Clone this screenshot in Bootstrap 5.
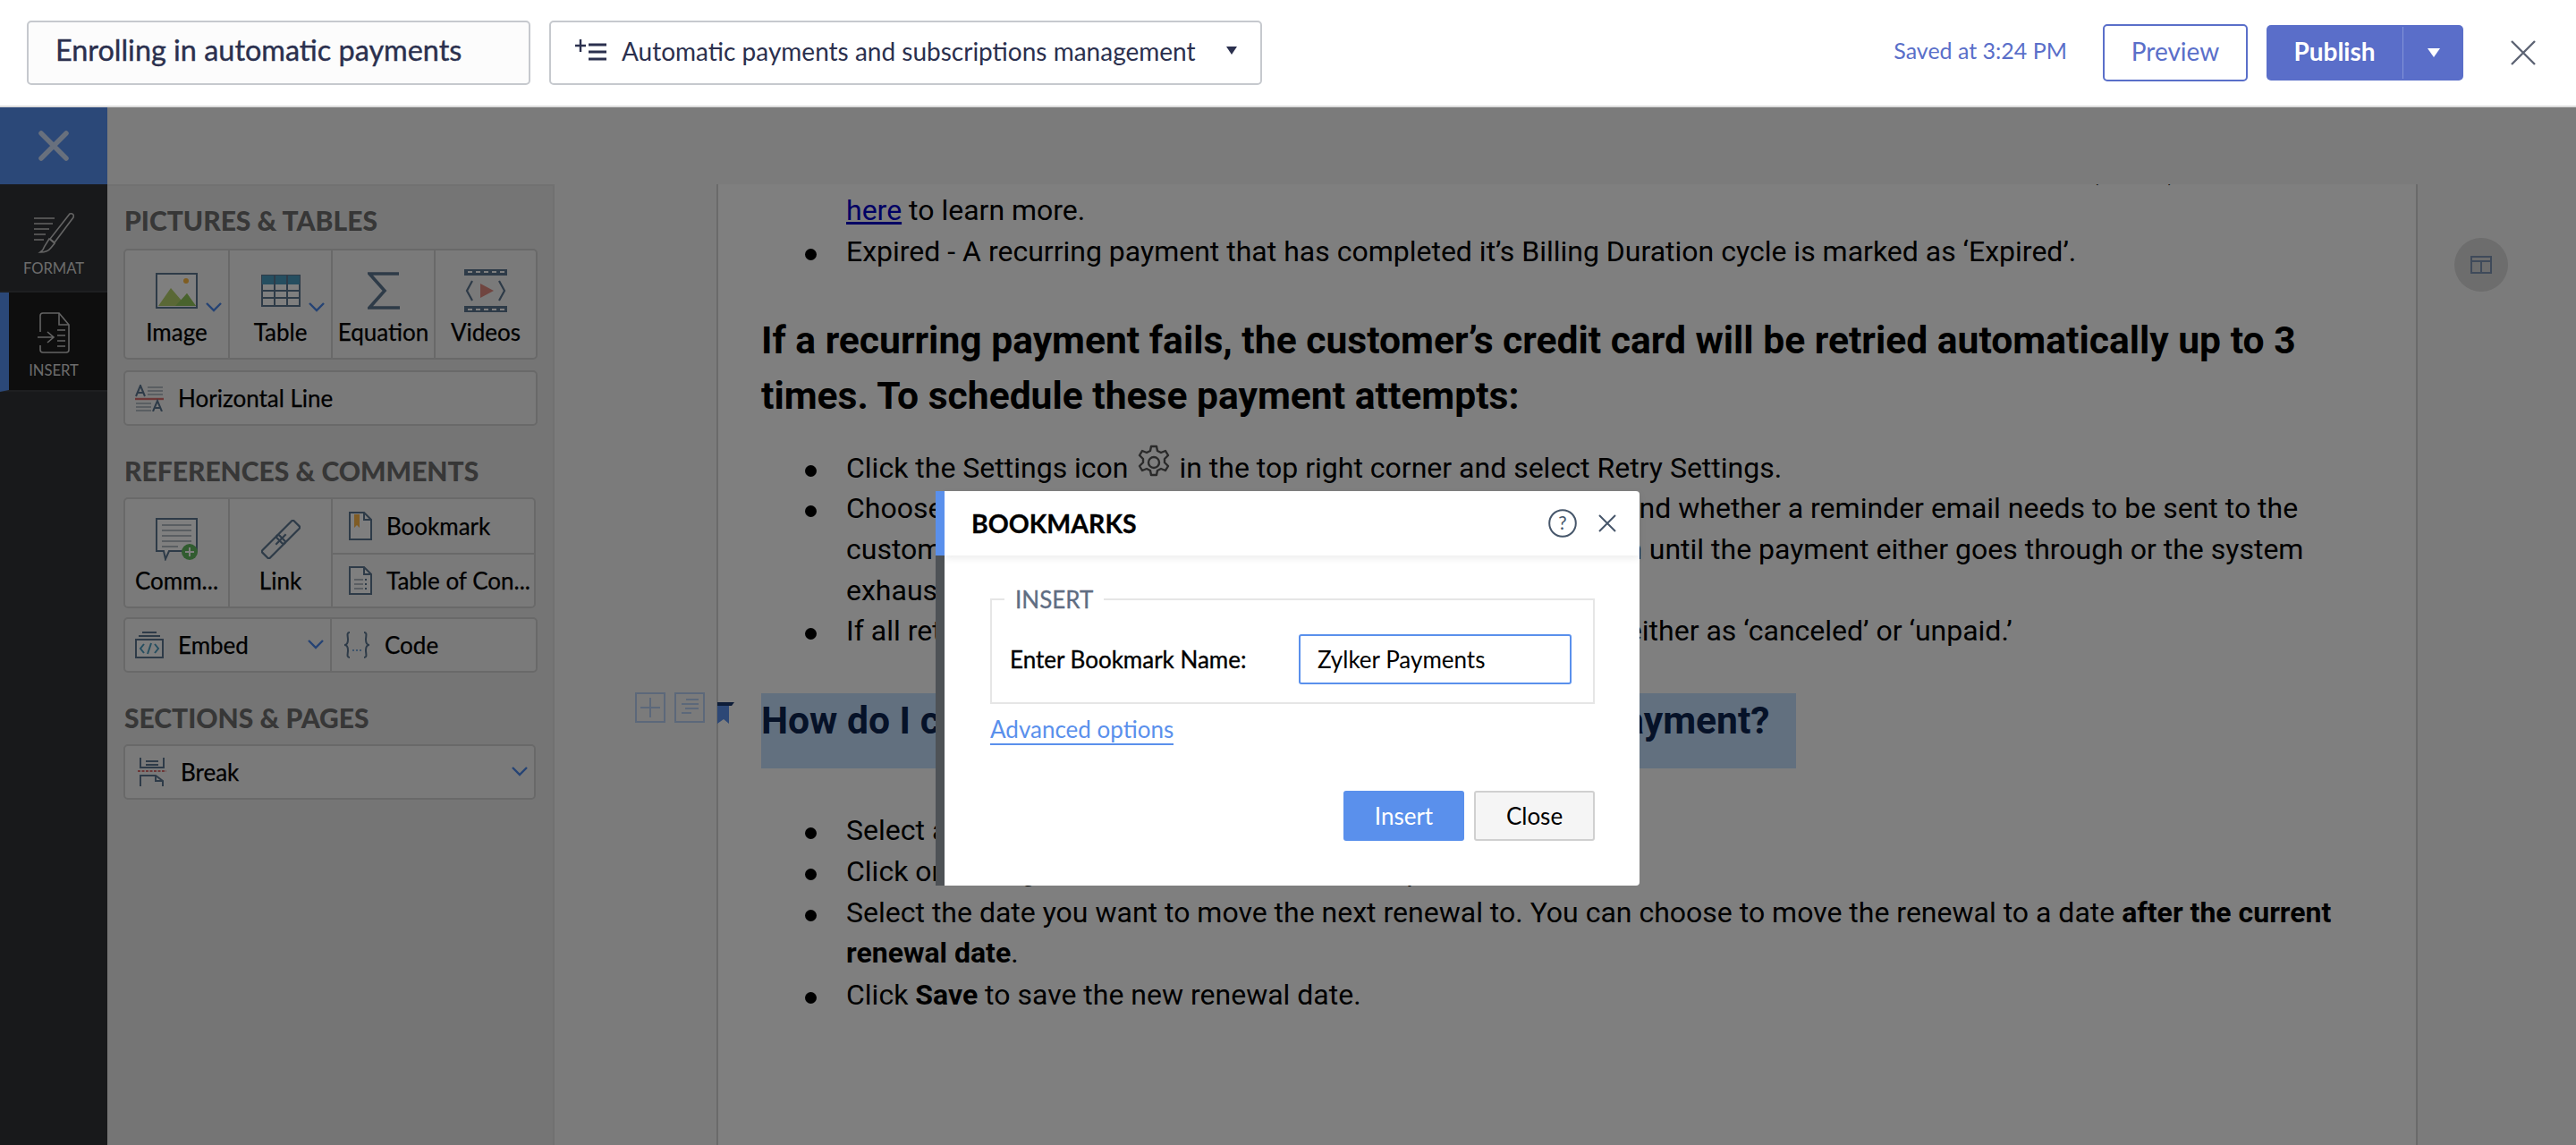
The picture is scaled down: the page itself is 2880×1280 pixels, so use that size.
<!DOCTYPE html>
<html lang="en">
<head>
<meta charset="utf-8">
<title>Enrolling in automatic payments</title>
<link rel="stylesheet" href="https://cdn.jsdelivr.net/npm/bootstrap@5.3.0/dist/css/bootstrap.min.css">
<style>
html,body{height:100%;margin:0;overflow:hidden;background:#fff}
body{font-family:"Lato","Liberation Sans",sans-serif;color:#000}
.top-bar{height:120px;border-bottom:2px solid #dcdcdc;padding:0 30px;background:#fff}
.title-box{width:563px;height:72px;border:2px solid #c6c9ce;border-radius:5px;background:#fcfcfc;padding:0 0 5px 30px;font-size:32.4px;color:#2b304e;-webkit-text-stroke:.4px #2b304e}
.cat-box{width:797px;height:72px;border:2px solid #c6c9ce;border-radius:5px;margin-left:21px;padding:0 26px 5px 27px;font-size:28px;color:#2b304e}
.caret-down{width:0;height:0;border-left:6px solid transparent;border-right:6px solid transparent;border-top:9px solid currentColor}
.saved-note{font-size:25px;color:#5a6fc9;margin-right:40px;padding-bottom:4px}
.btn-preview{width:162px;height:64px;border:2px solid #5a6fc9;border-radius:5px;color:#5a6fc9;font-size:28px;background:#fff;padding:0 0 5px}
.btn-preview:hover{color:#5a6fc9}
.publish-wrap{width:220px;height:62px;margin-left:21px;background:#5a6ec9;border-radius:5px;color:#fff}
.publish-main{width:153px;font-size:28px;font-weight:700;text-align:center;border-right:1px solid #8494d8;height:58px;line-height:54px}
.publish-arrow{flex:1;display:flex;justify-content:center}
.publish-arrow .caret-down{border-left-width:7px;border-right-width:7px;border-top-width:10px}
.shut-x{margin-left:53px;margin-right:15px}
.work-area{height:1160px;position:relative}
.scrim{position:absolute;inset:0;background:rgba(0,0,0,.5);z-index:5}
.side-rail{width:120px;background:#303236;color:#fff}
.rail-close{height:86px;background:#5690f0}
.rail-tab{height:121px;text-align:center;font-size:16.6px;line-height:22px;border-bottom:2px solid #3c3e42;padding-top:31px;color:#d8d8d8}
.rail-tab.is-on{height:111px;background:#1c1c1c;border-left:10px solid #5690f0;padding:22px 10px 0 0}
.rail-tab svg{display:block;margin:0 auto 6px}
.rail-tab.is-on svg{margin-bottom:8px}
.work-main{flex:1;min-width:0;background:#f6f6f6}
.strip-top{height:86px}
.work-row{height:1074px}
.tool-panel{width:500px;background:#ebebeb;border-top:2px solid #e2e2e2;border-right:2px solid #e2e2e2;padding:0 17px 0 19px}
.sec-title{font-size:30px;font-weight:900;color:#6e6e6e;line-height:36px;margin:0;text-transform:uppercase}
.tool-group{border:2px solid #d2d2d2;border-radius:5px;background:#f5f5f5;width:463px;margin-left:-1px;font-size:26px;-webkit-text-stroke:.25px #000}
.tool-group>*+*{border-left:2px solid #d2d2d2}
.big-cell{position:relative;width:115px;height:120px;padding-top:12px;display:flex;flex-direction:column;align-items:center;flex:none}
.big-cell .ic-box{height:66px;display:flex;align-items:center;justify-content:center}
.big-cell .lab{line-height:30px;white-space:nowrap;margin-top:-2px}
.down-mark{position:absolute;right:7px;top:58px}
.row-cell{height:58px;display:flex;align-items:center;position:relative;white-space:nowrap}
.side-slots{flex:1;display:flex;flex-direction:column;min-width:0}
.side-slots .row-cell{height:60px;padding-left:18px}
.side-slots .row-cell+.row-cell{border-top:2px solid #d2d2d2}
.slot-ic{margin-right:16px;flex:none}
.doc-zone{flex:1;position:relative;min-width:0}
.doc-page{position:absolute;left:181px;top:0;width:1902px;height:1074px;background:#fff;border-left:2px solid #d4d4d4;border-right:2px solid #d4d4d4;overflow:hidden;padding-left:48px;font-family:"Roboto","Liberation Sans",sans-serif;font-size:32px;line-height:45.75px;color:#000}
.doc-page ul{padding-left:95px;margin:0;white-space:nowrap;list-style:none}
.doc-page li{position:relative}
.doc-page li::before{content:"";position:absolute;left:-46px;top:19px;width:13px;height:13px;border-radius:50%;background:#000}
.doc-page h2{font-family:"Roboto","Liberation Sans",sans-serif;font-weight:700;font-size:42.6px;line-height:62px;margin:0;white-space:nowrap}
.doc-page a{color:#0000c8}
.doc-page h2.picked-head{background:#c4e0ff;width:1157px;height:84px;color:#0c2450;line-height:60px}
.gear-inline{vertical-align:top;margin:-4px 8px 0 1px}
.gut-box{position:absolute;top:568px;width:34px;height:34px;border:2px solid #b8d0f4}
.gut-flag{position:absolute;left:182px;top:579px}
.side-dot{position:absolute;left:2124px;top:60px;width:60px;height:60px;border-radius:50%;background:#dadada;display:flex;align-items:center;justify-content:center}
.book-modal{position:absolute;left:1046px;top:429px;width:787px;height:441px;z-index:10;border:0;border-left:10px solid #4e5256;border-radius:0 4px 4px 0;background:#fff;font-family:"Lato","Liberation Sans",sans-serif}
.book-head{height:72px;position:relative;padding:0 26px 0 31px;box-shadow:0 3px 8px rgba(0,0,0,.08)}
.book-head::before{content:"";position:absolute;left:-10px;top:0;width:10px;height:72px;background:#5a90ec}
.book-title{font-size:28.5px;font-weight:700;color:#000;margin:0 0 0 -1px;-webkit-text-stroke:.3px #000}
.book-set{margin:48px 50px 0 51px;height:118px;border:2px solid #e6e6e6;position:relative;padding:18px 24px 0 20px}
.book-legend{position:absolute;left:14px;top:-17px;padding:0 12px;background:#fff;font-size:26px;line-height:32px;color:#5f6d82;float:none;width:auto;margin:0;-webkit-text-stroke:.3px #5f6d82}
.book-label{font-size:26px;color:#000;margin:0;white-space:nowrap;-webkit-text-stroke:.35px #000}
.book-input{width:305px;height:56px;border:2px solid #5a90ec;border-radius:3px;padding:0 19px;font-size:26px;color:#000}
.book-input:focus{border-color:#5a90ec;box-shadow:none}
.adv-link{display:inline-block;margin:12px 0 0 51px;font-size:26px;line-height:32px;color:#5a90ec;text-decoration:none;border-bottom:2px solid #5a90ec}
.book-foot{position:absolute;right:50px;top:335px;gap:11px}
.btn-ins,.btn-cls{width:135px;height:56px;padding:0;font-size:26px;border-radius:3px}
.btn-ins{background:#5a90ec;border:0;color:#fff}
.btn-ins:hover{background:#5a90ec;color:#fff}
.btn-cls{background:#f5f5f5;border:2px solid #d0d0d0;color:#000}
.btn-cls:hover{background:#f5f5f5;color:#000;border-color:#d0d0d0}
.gap-t12{margin-top:12px}
.gap-t10{margin-top:10px}
.gap-t32{margin-top:32px}
.gap-t14{margin-top:14px}
.gap-t20{margin-top:20px}
.narrow-group{width:461px}
.half-cell{width:229px;padding-left:11px}
.rest-cell{flex:1;padding-left:13px}
.pad-11{padding-left:11px}
.pad-14{padding-left:14px}
.mid-mark{top:23px}
.video-cell{width:auto;flex:1}
.first-list{margin-top:-39px!important}
.head-one{margin-top:45px!important}
.list-two{margin-top:28px!important}
.gear-row{margin-bottom:-1px}
.head-two{margin-top:46px!important}
.list-three{margin-top:47px!important}
.save-row{margin-top:.5px}
.gut-a{left:90px}
.gut-b{left:134px}
</style>
</head>
<body>
<header class="top-bar d-flex align-items-center">
  <div class="title-box d-flex align-items-center">Enrolling in automatic payments</div>
  <div class="cat-box d-flex align-items-center justify-content-between">
    <span class="d-flex align-items-center">
      <svg width="36" height="30" viewBox="0 0 36 30" class="me-3" aria-hidden="true"><path d="M6 2v14M0 9h12" stroke="#2b304e" stroke-width="2.4" fill="none"/><path d="M15 8h20M15 16h20M15 24h20" stroke="#2b304e" stroke-width="3" fill="none"/></svg>
      <span>Automatic payments and subscriptions management</span>
    </span>
    <span class="caret-down"></span>
  </div>
  <div class="ms-auto d-flex align-items-center">
    <span class="saved-note">Saved at 3:24 PM</span>
    <button class="btn btn-preview" type="button">Preview</button>
    <div class="publish-wrap d-flex align-items-center">
      <div class="publish-main">Publish</div>
      <div class="publish-arrow"><span class="caret-down"></span></div>
    </div>
    <svg class="shut-x" width="28" height="28" viewBox="0 0 28 28" aria-hidden="true"><path d="M1 1l26 26M27 1L1 27" stroke="#5d6474" stroke-width="2.4" fill="none"/></svg>
  </div>
</header>

<div class="work-area d-flex">
  <aside class="side-rail d-flex flex-column">
    <div class="rail-close d-flex align-items-center justify-content-center">
      <svg width="34" height="34" viewBox="0 0 34 34" aria-hidden="true"><path d="M3 3l28 28M31 3L3 31" stroke="#fff" stroke-width="5.5" stroke-linecap="round" opacity=".72"/></svg>
    </div>
    <div class="rail-tab">
      <svg width="46" height="46" viewBox="0 0 46 46" aria-hidden="true" fill="none" stroke="#c8c8c8" stroke-width="1.6"><path d="M1 7h23M1 13h21M1 19h17M1 25h13M1 31h11"/><path d="M41 2c3-1 5 1 4 4L24 34l-5-4z"/><path d="M18 30l6 5-4 5c-3 4-8 5-12 5 3-2 4-4 5-7z"/></svg>
      FORMAT
    </div>
    <div class="rail-tab is-on">
      <svg width="38" height="46" viewBox="0 0 38 46" aria-hidden="true" fill="none" stroke="#c8c8c8" stroke-width="1.6"><path d="M4 22V4c0-2 1-3 3-3h18l11 13v28c0 2-1 3-3 3H7c-2 0-3-1-3-3v-5"/><path d="M25 1v13h11"/><path d="M1 28h17M12 22l7 6-7 6"/><path d="M23 20h9M23 26h9M23 32h9M23 38h9"/></svg>
      INSERT
    </div>
  </aside>

  <div class="work-main d-flex flex-column">
    <div class="strip-top"></div>
    <div class="work-row d-flex">
      <section class="tool-panel">
        <h6 class="sec-title gap-t20">Pictures &amp; Tables</h6>
        <div class="tool-group d-flex gap-t14">
          <div class="big-cell">
            <div class="ic-box"><svg width="47" height="40" viewBox="0 0 47 40" aria-hidden="true"><rect x="1" y="1" width="45" height="38" fill="#fff" stroke="#5c7690" stroke-width="2"/><path d="M3 37l14-20 12 14 6-8 10 14z" fill="#b5d06c"/><path d="M22 37l13-14 10 14z" fill="#93c65c"/><circle cx="34" cy="9" r="3" fill="#ffbb44"/></svg></div>
            <div class="lab">Image</div>
            <svg class="down-mark" width="18" height="11" viewBox="0 0 18 11" aria-hidden="true"><path d="M1 1l8 8 8-8" fill="none" stroke="#4a86e8" stroke-width="2.4"/></svg>
          </div>
          <div class="big-cell">
            <div class="ic-box"><svg width="44" height="36" viewBox="0 0 44 36" aria-hidden="true"><rect x="1" y="1" width="42" height="34" fill="#fff" stroke="#5c7690" stroke-width="2"/><rect x="1" y="1" width="42" height="10" fill="#4a9cc0"/><path d="M1 18h42M1 26h42M15 1v34M29 1v34" stroke="#5c7690" stroke-width="2"/></svg></div>
            <div class="lab">Table</div>
            <svg class="down-mark" width="18" height="11" viewBox="0 0 18 11" aria-hidden="true"><path d="M1 1l8 8 8-8" fill="none" stroke="#4a86e8" stroke-width="2.4"/></svg>
          </div>
          <div class="big-cell">
            <div class="ic-box"><svg width="36" height="42" viewBox="0 0 36 42" aria-hidden="true"><path d="M35 2H2l17 19L2 40h34" fill="none" stroke="#5c7690" stroke-width="3.6"/></svg></div>
            <div class="lab">Equation</div>
          </div>
          <div class="big-cell video-cell">
            <div class="ic-box"><svg width="48" height="48" viewBox="0 0 48 48" aria-hidden="true"><rect width="48" height="7" fill="#5c7690"/><rect y="41" width="48" height="7" fill="#5c7690"/><path d="M4 3h5M13 3h5M22 3h5M31 3h5M40 3h5M4 45h5M13 45h5M22 45h5M31 45h5M40 45h5" stroke="#fff" stroke-width="2"/><path d="M9 13L3 24l6 11M39 13l6 11-6 11" fill="none" stroke="#5c7690" stroke-width="2.2"/><path d="M18 16l15 8-15 8z" fill="#e08a80"/></svg></div>
            <div class="lab">Videos</div>
          </div>
        </div>
        <div class="tool-group gap-t12">
          <div class="row-cell pad-11">
            <svg width="32" height="30" viewBox="0 0 32 30" class="me-3" aria-hidden="true"><path d="M14 3h17M14 7h17M14 11h17" stroke="#b4bcc4" stroke-width="2"/><path d="M1 13L6 1l5 12M3 9h6" fill="none" stroke="#5c7690" stroke-width="2"/><path d="M0 16h32" stroke="#d87070" stroke-width="2.4"/><path d="M1 21h17M1 25h17M1 29h17" stroke="#b4bcc4" stroke-width="2"/><path d="M20 30l5-12 5 12M22 26h6" fill="none" stroke="#5c7690" stroke-width="2"/></svg>
            Horizontal Line
          </div>
        </div>

        <h6 class="sec-title gap-t32">References &amp; Comments</h6>
        <div class="tool-group narrow-group d-flex gap-t12">
          <div class="big-cell">
            <div class="ic-box"><svg width="48" height="48" viewBox="0 0 48 48" aria-hidden="true"><path d="M1 1h45v36H15l-4 9-2-9H1z" fill="#fff" stroke="#5c7690" stroke-width="2"/><path d="M7 8h33M7 14h33M7 20h33M7 26h33M7 32h18" stroke="#b4bcc4" stroke-width="2"/><circle cx="38" cy="38" r="9" fill="#62b860"/><path d="M38 33v10M33 38h10" stroke="#fff" stroke-width="2"/></svg></div>
            <div class="lab">Comm...</div>
          </div>
          <div class="big-cell">
            <div class="ic-box"><svg width="44" height="44" viewBox="0 0 44 44" aria-hidden="true" fill="none" stroke="#5c7690" stroke-width="2.2"><g transform="rotate(-45 22 22)"><rect x="-3" y="16" width="27" height="12" rx="2"/><rect x="20" y="16" width="27" height="12" rx="2"/><path d="M14 22h16"/></g></svg></div>
            <div class="lab">Link</div>
          </div>
          <div class="side-slots">
            <div class="row-cell"><svg width="26" height="32" viewBox="0 0 26 32" class="slot-ic" aria-hidden="true"><path d="M1 1h16l8 8v22H1z" fill="#fff" stroke="#5c7690" stroke-width="2"/><path d="M17 1v8h8" fill="none" stroke="#5c7690" stroke-width="2"/><path d="M6 3h6v15l-3-3-3 3z" fill="#ffb84a"/></svg>Bookmark</div>
            <div class="row-cell"><svg width="26" height="32" viewBox="0 0 26 32" class="slot-ic" aria-hidden="true"><path d="M1 1h16l8 8v22H1z" fill="#fff" stroke="#5c7690" stroke-width="2"/><path d="M17 1v8h8" fill="none" stroke="#5c7690" stroke-width="2"/><path d="M6 15h10M6 20h10M6 25h10" stroke="#b4bcc4" stroke-width="2"/><path d="M18 15h2M18 20h2M18 25h2" stroke="#5c7690" stroke-width="2"/></svg><span>Table of Con...</span></div>
          </div>
        </div>
        <div class="tool-group d-flex gap-t10">
          <div class="row-cell half-cell">
            <svg width="32" height="30" viewBox="0 0 32 30" class="me-3" aria-hidden="true"><path d="M8 1h16M4 5h24" stroke="#5c7690" stroke-width="2"/><rect x="1" y="9" width="30" height="20" fill="#fff" stroke="#5c7690" stroke-width="2"/><path d="M10 14l-4 5 4 5M22 14l4 5-4 5" fill="none" stroke="#4a9cc0" stroke-width="2"/><path d="M18 13l-4 12" stroke="#4a9cc0" stroke-width="2"/></svg>
            Embed
            <svg class="down-mark mid-mark" width="18" height="11" viewBox="0 0 18 11" aria-hidden="true"><path d="M1 1l8 8 8-8" fill="none" stroke="#4a86e8" stroke-width="2.4"/></svg>
          </div>
          <div class="row-cell rest-cell">
            <svg width="30" height="30" viewBox="0 0 30 30" class="me-3" aria-hidden="true"><path d="M7 1C3 1 5 5 5 9c0 4-1 6-4 6 3 0 4 2 4 6 0 4-2 8 2 8M23 1c4 0 2 4 2 8 0 4 1 6 4 6-3 0-4 2-4 6 0 4 2 8-2 8" fill="none" stroke="#5c7690" stroke-width="2"/><path d="M10 21h2M14 21h2M18 21h2" stroke="#7caad8" stroke-width="2"/></svg>
            Code
          </div>
        </div>

        <h6 class="sec-title gap-t32">Sections &amp; Pages</h6>
        <div class="tool-group narrow-group gap-t12">
          <div class="row-cell pad-14">
            <svg width="32" height="32" viewBox="0 0 32 32" class="me-3" aria-hidden="true"><path d="M3 0v11h26V0M9 4h14M9 8h14" fill="none" stroke="#5c7690" stroke-width="2"/><path d="M0 15h32" stroke="#d87070" stroke-width="2" stroke-dasharray="3 1.5"/><path d="M3 32V20h17l8 6v6M20 20v6h8" fill="none" stroke="#5c7690" stroke-width="2"/></svg>
            Break
            <svg class="down-mark mid-mark" width="18" height="11" viewBox="0 0 18 11" aria-hidden="true"><path d="M1 1l8 8 8-8" fill="none" stroke="#4a86e8" stroke-width="2.4"/></svg>
          </div>
        </div>
      </section>

      <div class="doc-zone">
        <div class="doc-page">
          <ul class="first-list">
            <li>Unpaid - A recurring payment is marked as unpaid when all retries have failed. Change this setting (if any) or<br><a href="#">here</a> to learn more.</li>
            <li>Expired - A recurring payment that has completed it’s Billing Duration cycle is marked as ‘Expired’.</li>
          </ul>
          <h2 class="head-one">If a recurring payment fails, the customer’s credit card will be retried automatically up to 3<br>times. To schedule these payment attempts:</h2>
          <ul class="list-two">
            <li class="gear-row">Click the Settings icon <svg class="gear-inline" width="40" height="40" viewBox="0 0 40 40" aria-hidden="true"><path d="M17 2h6l1 5 4 2 5-2 3 5-4 4v4l4 4-3 5-5-2-4 2-1 5h-6l-1-5-4-2-5 2-3-5 4-4v-4l-4-4 3-5 5 2 4-2z" fill="none" stroke="#555" stroke-width="2.4" stroke-linejoin="round"/><circle cx="20" cy="20" r="6" fill="none" stroke="#555" stroke-width="2.4"/></svg>in the top right corner and select Retry Settings.</li>
            <li>Choose the number of retry attempts, the gap between them, and whether a reminder email needs to be sent to the<br>customer after a failed attempt. The card will be charged again until the payment either goes through or the system<br>exhausts all the configured retry attempts.</li>
            <li>If all retry attempts fail, you can label each recurring payment either as ‘canceled’ or ‘unpaid.’</li>
          </ul>
          <h2 class="picked-head head-two">How do I change the renewal date for a recurring payment?</h2>
          <ul class="list-three">
            <li>Select a recurring payment from the list of active payments.</li>
            <li>Click on Change Renewal Date in the More options menu.</li>
            <li>Select the date you want to move the next renewal to. You can choose to move the renewal to a date <b>after the current<br>renewal date</b>.</li>
            <li class="save-row">Click <b>Save</b> to save the new renewal date.</li>
          </ul>
        </div>
        <div class="gut-box gut-a d-flex align-items-center justify-content-center"><svg width="22" height="22" viewBox="0 0 22 22" aria-hidden="true"><path d="M11 0v22M0 11h22" stroke="#b8d0f4" stroke-width="2"/></svg></div>
        <div class="gut-box gut-b d-flex align-items-center justify-content-center"><svg width="22" height="22" viewBox="0 0 22 22" aria-hidden="true"><path d="M7 2h14M2 7h19M6 12h15M2 17h11" stroke="#b8d0f4" stroke-width="2"/></svg></div>
        <svg class="gut-flag" width="19" height="24" viewBox="0 0 19 24" aria-hidden="true"><path d="M0 4h13v20l-6-5-7 5z" fill="#5a90ec"/><path d="M0 0h19l-3 4H0z" fill="#1d3a70"/></svg>
        <div class="side-dot"><svg width="24" height="20" viewBox="0 0 24 20" aria-hidden="true"><path d="M1 1h22v18H1zM1 6h22M12 6v13" fill="none" stroke="#7e94b4" stroke-width="2"/></svg></div>
      </div>
    </div>
  </div>

  <div class="scrim"></div>

  <div class="modal-content book-modal" role="dialog">
    <div class="book-head d-flex align-items-center justify-content-between">
      <h5 class="book-title">BOOKMARKS</h5>
      <div class="d-flex align-items-center">
        <svg width="32" height="32" viewBox="0 0 32 32" aria-hidden="true"><circle cx="16" cy="16" r="14.8" fill="none" stroke="#46566a" stroke-width="2"/><text x="16" y="23" text-anchor="middle" font-family="Lato" font-size="21" fill="#46566a">?</text></svg>
        <svg width="20" height="20" viewBox="0 0 20 20" class="ms-4" aria-hidden="true"><path d="M1 1l18 18M19 1L1 19" stroke="#46566a" stroke-width="2"/></svg>
      </div>
    </div>
    <div class="book-set d-flex align-items-center justify-content-between">
      <div class="book-legend">INSERT</div>
      <label class="book-label" for="bm">Enter Bookmark Name:</label>
      <input class="form-control book-input" id="bm" value="Zylker Payments">
    </div>
    <div><a href="#" class="adv-link">Advanced options</a></div>
    <div class="book-foot d-flex">
      <button class="btn btn-ins" type="button">Insert</button>
      <button class="btn btn-cls" type="button">Close</button>
    </div>
  </div>
</div>
<script src="https://cdn.jsdelivr.net/npm/bootstrap@5.3.0/dist/js/bootstrap.bundle.min.js"></script>
</body>
</html>
